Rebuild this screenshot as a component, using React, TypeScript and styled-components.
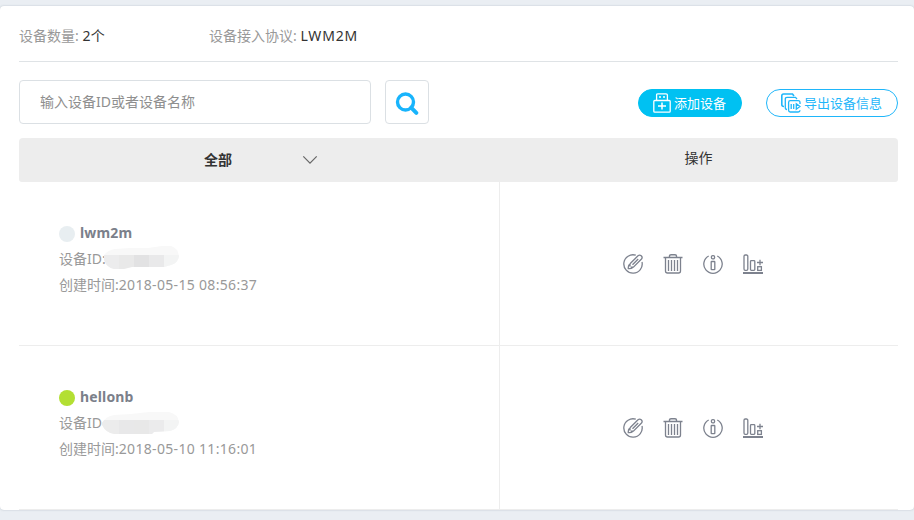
import React from "react";
import styled, { createGlobalStyle } from "styled-components";

const GlobalStyle = createGlobalStyle`
  * { box-sizing: border-box; }
  body {
    margin: 0;
    background: #eaeef3;
    font-family: "Noto Sans", "Noto Sans CJK SC", sans-serif;
    font-size: 14px;
    color: #999;
  }
`;

const Page = styled.div`
  height: 520px;
  padding-top: 6px;
  overflow: hidden;
`;

const Panel = styled.main`
  height: 504px;
  padding: 0 16px 0 19px;
  background: #fff;
  border-radius: 4px;
  box-shadow: 0 0 2px rgba(90, 105, 120, 0.35);
`;

const Summary = styled.header`
  display: flex;
  height: 56px;
  border-bottom: 1px solid #dfe3e6;
  line-height: 60px;
`;

const Fact = styled.div<{ $width?: number }>`
  width: ${(p) => (p.$width ? `${p.$width}px` : "auto")};
  white-space: nowrap;
`;

const FactValue = styled.span<{ $spacing?: number }>`
  color: #333;
  letter-spacing: ${(p) => p.$spacing ?? 0}px;
`;

const Toolbar = styled.div`
  display: flex;
  align-items: center;
  height: 76px;
  padding-top: 4px;
`;

const SearchInput = styled.input`
  width: 352px;
  height: 44px;
  padding: 0 20px 1px;
  border: 1px solid #dbe0e4;
  border-radius: 4px;
  outline: none;
  font: inherit;
  color: #555;
  &::placeholder { color: #8e8e8e; opacity: 1; }
`;

const SearchButton = styled.button`
  display: flex;
  align-items: center;
  justify-content: center;
  width: 44px;
  height: 44px;
  margin: 0 auto 0 14px;
  padding: 4px 0 0;
  border: 1px solid #dbe0e4;
  border-radius: 4px;
  background: #fff;
`;

const PillButton = styled.button<{ $filled?: boolean; $width: number }>`
  display: flex;
  align-items: center;
  gap: 3px;
  width: ${(p) => p.$width}px;
  height: 28px;
  margin-top: 2px;
  margin-left: ${(p) => (p.$filled ? 0 : 24)}px;
  padding: 0 0 0 14px;
  border: 1px solid ${(p) => (p.$filled ? "#00c1f2" : "#1fb6fa")};
  border-radius: 14px;
  background: ${(p) => (p.$filled ? "#00c1f2" : "#fff")};
  color: ${(p) => (p.$filled ? "#fff" : "#1fb6fa")};
  font-family: inherit;
  font-size: 13px;
  line-height: 24px;
  white-space: nowrap;
  svg { flex: none; }
`;

const PillLabel = styled.span`
  margin-top: -1px;
`;

const TableHead = styled.div`
  display: grid;
  grid-template-columns: 480px 1fr;
  height: 44px;
  border-radius: 4px 4px 3px 3px;
  background: #ededed;
  color: #333;
`;

const FilterCell = styled.div`
  display: flex;
  align-items: center;
  gap: 70px;
  padding-left: 185px;
  font-weight: 700;
`;

const FilterLabel = styled.span`
  margin-top: -2px;
`;

const ActionHeading = styled.div`
  line-height: 40px;
  text-align: center;
`;

const DeviceRow = styled.section`
  display: grid;
  grid-template-columns: 481px 1fr;
  height: 164px;
  border-bottom: 1px solid #ededed;
`;

const DeviceInfo = styled.div`
  padding: 38px 0 0 40px;
  border-right: 1px solid #ededed;
  line-height: 26px;
`;

const DeviceName = styled.div`
  display: flex;
  align-items: center;
  gap: 5px;
  color: #7b808a;
  font-weight: 700;
  letter-spacing: 0.15px;
`;

const StatusDot = styled.i<{ $online: boolean }>`
  width: 16px;
  height: 16px;
  margin-top: 2px;
  border-radius: 50%;
  background: ${(p) => (p.$online ? "#b3df33" : "#e8eef1")};
`;

const DeviceLine = styled.div`
  display: flex;
  height: 26px;
  white-space: nowrap;
`;

const Mask = styled.svg<{ $shiftX: number; $shiftY: number }>`
  flex: none;
  margin: ${(p) => p.$shiftY}px 0 0 ${(p) => p.$shiftX}px;
`;

const DateText = styled.span`
  letter-spacing: 0.32px;
`;

const Actions = styled.div`
  display: flex;
  align-items: center;
  gap: 20px;
  padding-left: 123px;
`;

const IconButton = styled.button`
  display: flex;
  width: 20px;
  height: 20px;
  padding: 0;
  border: 0;
  background: none;
  color: #7d828e;
`;

const Glyph = ({ children }: { children: React.ReactNode }) => (
  <svg width="20" height="20" viewBox="0 0 20 20" fill="none" stroke="currentColor" strokeWidth="1.3">
    {children}
  </svg>
);

const EditIcon = () => (
  <Glyph>
    <path d="M12.8 1.2A9.2 9.2 0 1 0 19 8" />
    <path d="M7 9.8 15 1.7Q16.6.4 18.2 1.7 19.9 3.3 18.5 5L10.4 13.2H7.8M7 9.8V12.5M9.5 10.8 15.2 5M6.6 10.2Q5 12 5.3 14.6 8 15 9.8 13.6" />
  </Glyph>
);
const TrashIcon = () => (
  <Glyph>
    <path d="M.5 3.5H19.5M6.5 3V2Q6.5.7 8 .7H12Q13.5.7 13.5 2V3" strokeWidth="1.4" />
    <path d="M2.5 4V17Q2.5 19 4.5 19H15.5Q17.5 19 17.5 17V4M5.5 6V17M8.5 6V17M11.5 6V17M14.5 6V17" />
  </Glyph>
);
const InfoIcon = () => (
  <Glyph>
    <path d="M5.7 2A9.2 9.2 0 1 0 14.3 2" />
    <rect x="8.4" y="1.6" width="3.2" height="3.2" rx="1.3" />
    <rect x="8.2" y="7.5" width="3.6" height="8.2" rx=".5" />
  </Glyph>
);
const DataIcon = () => (
  <Glyph>
    <rect x="1" y="1" width="3.8" height="15.3" rx="1.2" />
    <rect x="7.5" y="6.7" width="4.3" height="9.6" rx=".8" />
    <rect x="14.7" y="12.7" width="3.7" height="3.7" />
    <path d="M14 8.5H20M17 5.7V11.2" />
    <path d="M0 19H20" strokeWidth="2" />
  </Glyph>
);

const maskShapes = [
  "M2 9Q6 4 13 3L28 2H46L60 0H69Q76 2 77 10 76 17 69 19L62 21H30L22 23H12Q5 22 2 14Z",
  "M0 11Q4 4 12 3L29 2 47 0H67Q76 2 77 10 76 17 68 19L52 20 50 22H12Q4 21 0 13Z",
];
const maskCells = [
  ["#ececed", "#e9e9e9", "#e2e2e3", "#e9e9ea", "#f3f4f4"],
  ["#ececec", "#e8e8e9", "#e8e8e8", "#ebebec", "#f3f4f4"],
];

const RedactedId = ({ variant }: { variant: number }) => (
  <Mask $shiftX={variant ? 0 : -4} $shiftY={variant ? 2 : 0} width="78" height="24" viewBox="0 0 78 24">
    <clipPath id={`mask-${variant}`}>
      <path d={maskShapes[variant]} />
    </clipPath>
    <g clipPath={`url(#mask-${variant})`} shapeRendering="crispEdges">
      <rect width="78" height="24" fill="#f8f8f8" />
      {maskCells[variant].map((fill, i) => (
        <rect key={i} x={i ? 2 + i * 15 : 0} y={variant ? 8 : 9} width={i ? 15 : 17} height="16" fill={fill} />
      ))}
    </g>
  </Mask>
);

const devices = [
  { name: "lwm2m", online: false, created: "2018-05-15 08:56:37" },
  { name: "hellonb", online: true, created: "2018-05-10 11:16:01" },
];

export default function App() {
  return (
    <Page>
      <GlobalStyle />
      <Panel>
        <Summary>
          <Fact $width={190}>设备数量: <FactValue $spacing={0.3}>2个</FactValue></Fact>
          <Fact>设备接入协议: <FactValue $spacing={0.85}>LWM2M</FactValue></Fact>
        </Summary>
        <Toolbar>
          <SearchInput placeholder="输入设备ID或者设备名称" />
          <SearchButton aria-label="搜索">
            <svg width="24" height="24" viewBox="0 0 24 24" fill="none" stroke="#18b4fc">
              <circle cx="10.5" cy="10" r="8" strokeWidth="3.4" />
              <path d="M16.2 15.7 21.3 20.8" strokeWidth="4" strokeLinecap="round" />
            </svg>
          </SearchButton>
          <PillButton $filled $width={104}>
            <svg width="18" height="20" viewBox="0 0 18 20" fill="none" stroke="currentColor" strokeWidth="1.3">
              <path d="M3.6 7V2Q3.6.8 5 .8H13Q14.4.8 14.4 2V7M6 4H8M10 4H12" />
              <rect x=".8" y="7.5" width="16.4" height="11.7" rx="1" />
              <path d="M5 13H13M9 9.5V16.5" strokeWidth="1.5" />
            </svg>
            <PillLabel>添加设备</PillLabel>
          </PillButton>
          <PillButton $width={132}>
            <svg width="20" height="20" viewBox="0 0 20 20" fill="none" stroke="currentColor" strokeWidth="1.3">
              <path d="M3 13.5Q.8 13.5.8 11.5V2.8Q.8 1 2.6 1H11.5L13 3" strokeWidth="1.6" />
              <path d="M6 16.5Q4.3 16.5 4.3 14.7V6Q4.3 4.4 6 4.4H14.5L16 6" />
              <path d="M19 11V9.5Q19 7.6 17.2 7.6H9.2Q7.6 7.6 7.6 9.4V17.2Q7.6 19 9.2 19H17.2Q19 19 19 17.2" />
              <path d="M10.2 11V16M12.7 11V16M15.3 10.7 19 13.5 15.3 16.2Z" />
            </svg>
            <PillLabel>导出设备信息</PillLabel>
          </PillButton>
        </Toolbar>
        <TableHead>
          <FilterCell>
            <FilterLabel>全部</FilterLabel>
            <svg width="16" height="10" viewBox="0 0 16 10" fill="none" stroke="#666" strokeWidth="1.2">
              <path d="M1.3 1.3 8 8.2 14.7 1.3" />
            </svg>
          </FilterCell>
          <ActionHeading>操作</ActionHeading>
        </TableHead>
        {devices.map((device, index) => (
          <DeviceRow key={device.name}>
            <DeviceInfo>
              <DeviceName><StatusDot $online={device.online} />{device.name}</DeviceName>
              <DeviceLine>设备ID{index === 0 ? ":" : ""}<RedactedId variant={index} /></DeviceLine>
              <DeviceLine>创建时间:<DateText>{device.created}</DateText></DeviceLine>
            </DeviceInfo>
            <Actions>
              <IconButton aria-label="编辑"><EditIcon /></IconButton>
              <IconButton aria-label="删除"><TrashIcon /></IconButton>
              <IconButton aria-label="详情"><InfoIcon /></IconButton>
              <IconButton aria-label="数据"><DataIcon /></IconButton>
            </Actions>
          </DeviceRow>
        ))}
      </Panel>
    </Page>
  );
}
